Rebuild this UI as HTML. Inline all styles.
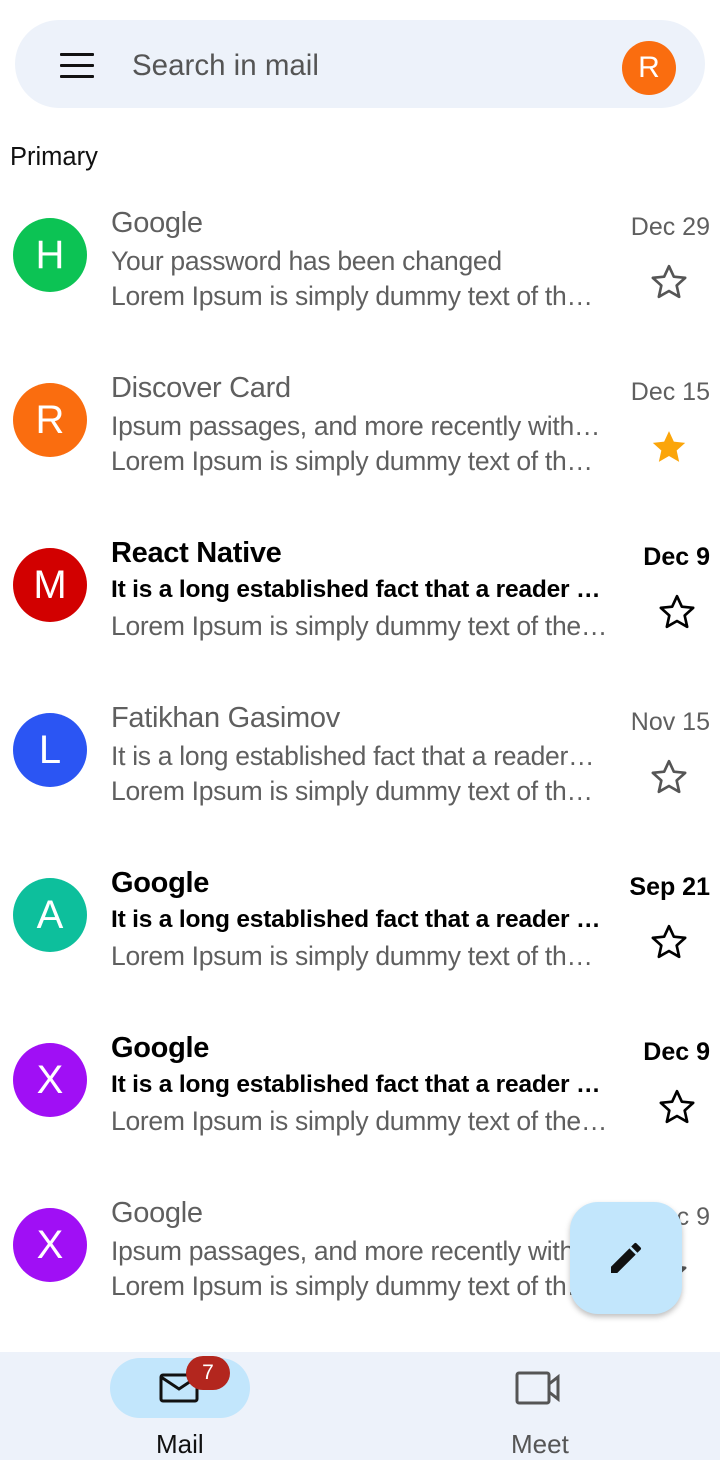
<!DOCTYPE html>
<html><head><meta charset="utf-8"><style>
*{margin:0;padding:0;box-sizing:border-box}
body{width:720px;height:1460px;background:#fff;font-family:"Liberation Sans",sans-serif;position:relative;overflow:hidden;color:#5f5f5f}
.search{position:absolute;left:15px;top:20px;width:690px;height:88px;border-radius:44px;background:#edf2fa}
.ham{position:absolute;left:45px;top:33px;width:34px}
.ham i{display:block;height:3px;background:#111;margin-bottom:8px;border-radius:1px}
.st{position:absolute;left:117px;top:29px;font-size:29.5px;color:#555}
.av{position:absolute;width:74px;height:74px;border-radius:50%;color:#fff;font-size:40px;font-weight:300;text-align:center;line-height:74px;left:13px}
.prof{position:absolute;left:607px;top:21px;width:54px;height:54px;border-radius:50%;background:#fa6d0f;color:#fff;font-size:30px;text-align:center;line-height:54px}
.prim{position:absolute;left:10px;top:143px;font-size:25.5px;color:#111}
.row{position:absolute;left:0;width:720px;height:165px}
.t{position:absolute;left:111px;white-space:nowrap;overflow:hidden;text-overflow:ellipsis;width:490px;font-size:26.5px;letter-spacing:-0.3px}
.n{top:7px;font-size:29px}
.l2{top:46px}.l3{top:81px}
.d{position:absolute;right:10px;top:13px;font-size:25px}
.star{position:absolute;left:649px;top:62px}
.b .n,.b .l2,.b .d{color:#000;font-weight:bold}
.b .l2{font-size:24.5px;letter-spacing:-0.2px}
.fab{position:absolute;left:570px;top:1202px;width:112px;height:112px;border-radius:28px;background:#c2e6fc;box-shadow:0 3px 6px rgba(0,0,0,.25)}
.nav{position:absolute;left:0;top:1352px;width:720px;height:108px;background:#edf2fa}
.pill{position:absolute;left:110px;top:6px;width:140px;height:60px;border-radius:30px;background:#c2e6fc}
.badge{position:absolute;left:186px;top:1356px;width:44px;height:34px;border-radius:17px;background:#b3261e;color:#fff;font-size:21px;text-align:center;line-height:34px}
.lab{position:absolute;top:1429px;font-size:26px}
</style></head><body>
<div class="search"><div class="ham"><i></i><i></i><i></i></div><div class="st">Search in mail</div><div class="prof">R</div></div>
<div class="prim">Primary</div>

<div class="row" style="top:200px"><div class="av" style="top:18px;background:#0cc354">H</div><div class="t n">Google</div><div class="t l2">Your password has been changed</div><div class="t l3">Lorem Ipsum is simply dummy text of the printing</div><div class="d">Dec 29</div><svg class="star" width="40" height="40" viewBox="0 0 24 24"><path d="M12 2.5l2.9 6.3 6.8.7-5.1 4.6 1.5 6.8L12 17.4l-6.1 3.5 1.5-6.8-5.1-4.6 6.8-.7z" fill="none" stroke="#555" stroke-width="1.6" stroke-linejoin="round"/></svg></div>

<div class="row" style="top:365px"><div class="av" style="top:18px;background:#fa6d0f">R</div><div class="t n">Discover Card</div><div class="t l2">Ipsum passages, and more recently with desktop</div><div class="t l3">Lorem Ipsum is simply dummy text of the printing</div><div class="d">Dec 15</div><svg class="star" width="40" height="40" viewBox="0 0 24 24"><path d="M12 2.5l2.9 6.3 6.8.7-5.1 4.6 1.5 6.8L12 17.4l-6.1 3.5 1.5-6.8-5.1-4.6 6.8-.7z" fill="#fba50a"/></svg></div>

<div class="row b" style="top:530px"><div class="av" style="top:18px;background:#d20000">M</div><div class="t n">React Native</div><div class="t l2">It is a long established fact that a reader will</div><div class="t l3" style="width:502px">Lorem Ipsum is simply dummy text of the printing</div><div class="d">Dec 9</div><svg class="star" style="left:657px" width="40" height="40" viewBox="0 0 24 24"><path d="M12 2.5l2.9 6.3 6.8.7-5.1 4.6 1.5 6.8L12 17.4l-6.1 3.5 1.5-6.8-5.1-4.6 6.8-.7z" fill="none" stroke="#000" stroke-width="1.6" stroke-linejoin="round"/></svg></div>

<div class="row" style="top:695px"><div class="av" style="top:18px;background:#2b55f3">L</div><div class="t n">Fatikhan Gasimov</div><div class="t l2">It is a long established fact that a reader will</div><div class="t l3">Lorem Ipsum is simply dummy text of the printing</div><div class="d">Nov 15</div><svg class="star" width="40" height="40" viewBox="0 0 24 24"><path d="M12 2.5l2.9 6.3 6.8.7-5.1 4.6 1.5 6.8L12 17.4l-6.1 3.5 1.5-6.8-5.1-4.6 6.8-.7z" fill="none" stroke="#555" stroke-width="1.6" stroke-linejoin="round"/></svg></div>

<div class="row b" style="top:860px"><div class="av" style="top:18px;background:#0dbf9c">A</div><div class="t n">Google</div><div class="t l2">It is a long established fact that a reader will</div><div class="t l3">Lorem Ipsum is simply dummy text of the printing</div><div class="d">Sep 21</div><svg class="star" width="40" height="40" viewBox="0 0 24 24"><path d="M12 2.5l2.9 6.3 6.8.7-5.1 4.6 1.5 6.8L12 17.4l-6.1 3.5 1.5-6.8-5.1-4.6 6.8-.7z" fill="none" stroke="#000" stroke-width="1.6" stroke-linejoin="round"/></svg></div>

<div class="row b" style="top:1025px"><div class="av" style="top:18px;background:#a00ff5">X</div><div class="t n">Google</div><div class="t l2">It is a long established fact that a reader will</div><div class="t l3" style="width:502px">Lorem Ipsum is simply dummy text of the printing</div><div class="d">Dec 9</div><svg class="star" style="left:657px" width="40" height="40" viewBox="0 0 24 24"><path d="M12 2.5l2.9 6.3 6.8.7-5.1 4.6 1.5 6.8L12 17.4l-6.1 3.5 1.5-6.8-5.1-4.6 6.8-.7z" fill="none" stroke="#000" stroke-width="1.6" stroke-linejoin="round"/></svg></div>

<div class="row" style="top:1190px"><div class="av" style="top:18px;background:#a00ff5">X</div><div class="t n">Google</div><div class="t l2">Ipsum passages, and more recently with desktop</div><div class="t l3">Lorem Ipsum is simply dummy text of the printing</div><div class="d">Dec 9</div><svg class="star" width="40" height="40" viewBox="0 0 24 24"><path d="M12 2.5l2.9 6.3 6.8.7-5.1 4.6 1.5 6.8L12 17.4l-6.1 3.5 1.5-6.8-5.1-4.6 6.8-.7z" fill="none" stroke="#555" stroke-width="1.6" stroke-linejoin="round"/></svg></div>

<div class="fab"><svg style="position:absolute;left:36px;top:36px" width="40" height="40" viewBox="0 0 24 24"><path d="M3 17.25V21h3.75L17.81 9.94l-3.75-3.75L3 17.25zM20.71 7.04a1 1 0 000-1.41l-2.34-2.34a1 1 0 00-1.41 0l-1.83 1.83 3.750 3.75 1.83-1.83z" fill="#111"/></svg></div>

<div class="nav"><div class="pill"></div>
<svg style="position:absolute;left:158px;top:18px" width="44" height="36" viewBox="0 0 44 36"><rect x="3" y="5" width="36" height="26" rx="2" fill="none" stroke="#111" stroke-width="3"/><path d="M3 7l18 12 18-12" fill="none" stroke="#111" stroke-width="3"/></svg>
<svg style="position:absolute;left:514px;top:18px" width="52" height="36" viewBox="0 0 52 36"><rect x="3" y="3" width="32" height="30" rx="2" fill="none" stroke="#555" stroke-width="3"/><path d="M35 14l9-7v22l-9-7" fill="none" stroke="#555" stroke-width="3"/></svg>
</div>
<div class="badge">7</div>
<div class="lab" style="left:156px;color:#111">Mail</div>
<div class="lab" style="left:511px;color:#555">Meet</div>
</body></html>
